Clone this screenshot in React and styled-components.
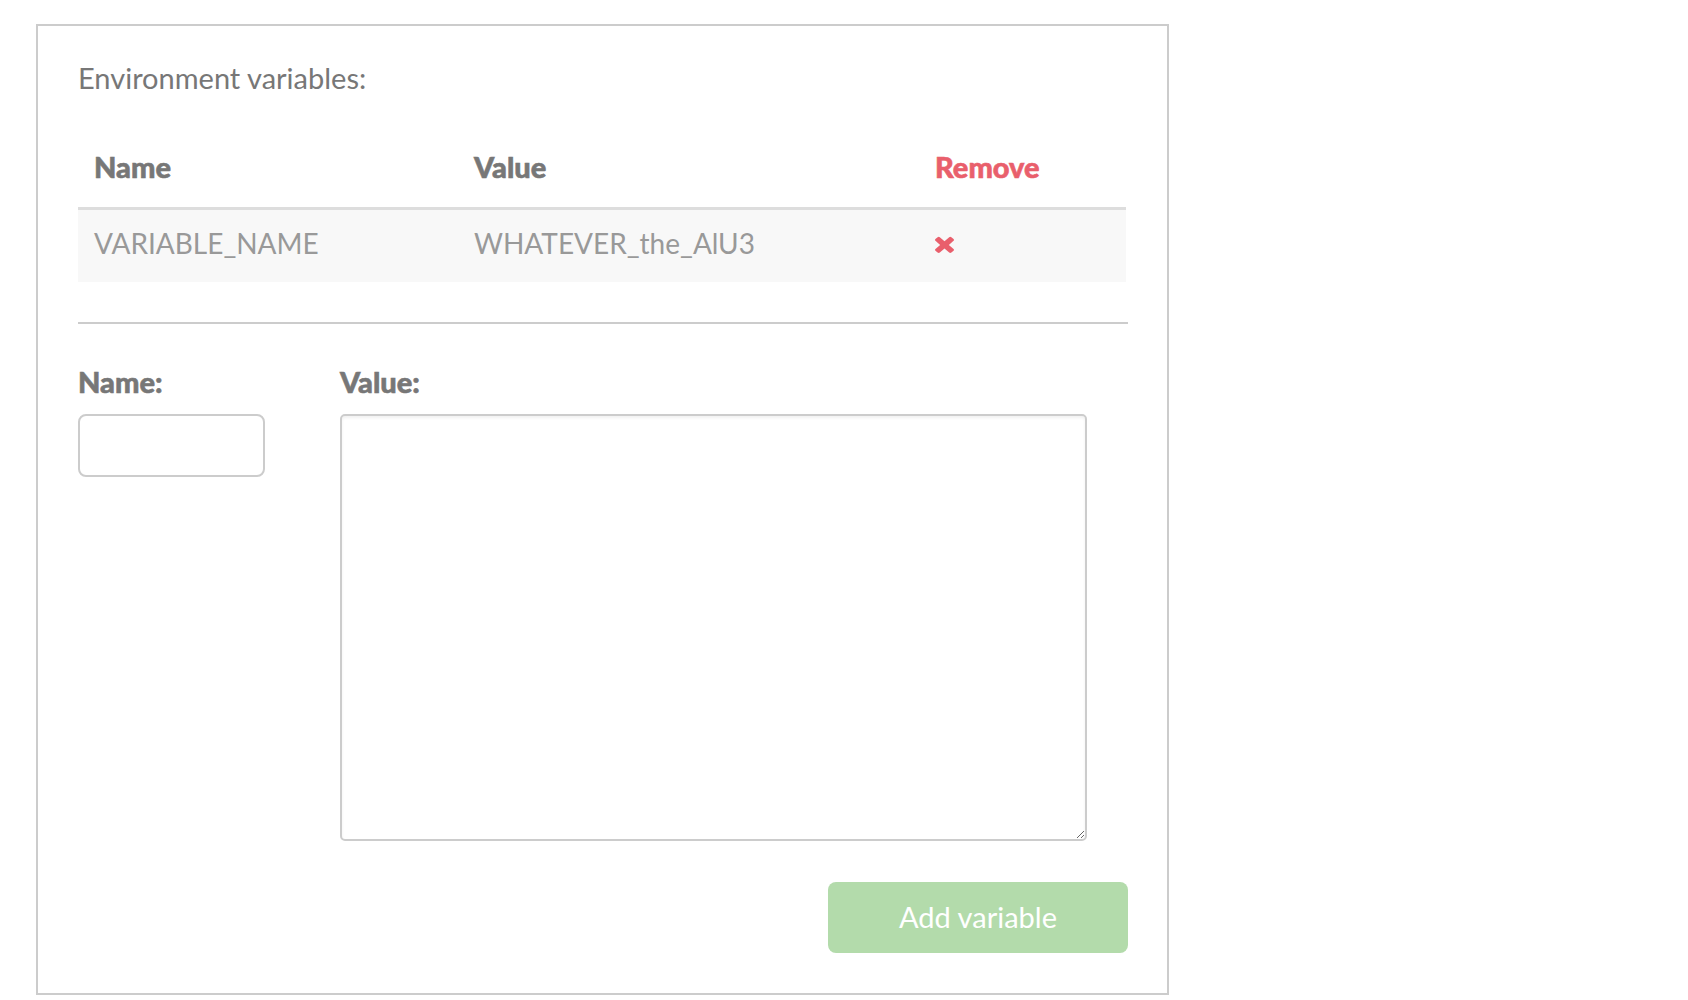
import styled, { createGlobalStyle } from "styled-components";

const GlobalStyle = createGlobalStyle`
  body {
    margin: 0;
    background: #ffffff;
    font-family: Lato, "Open Sans", sans-serif;
  }
`;

const Panel = styled.div`
  box-sizing: border-box;
  width: 1133px;
  margin: 24px 0 0 36px;
  padding: 35px 39px 40px 40px;
  border: 2px solid #cccccc;
`;

const Title = styled.h2`
  margin: 0;
  font-size: 29px;
  line-height: 34px;
  font-weight: 400;
  color: #777777;
`;

const Table = styled.table`
  width: 1048px;
  margin-top: 39px;
  border-collapse: separate;
  border-spacing: 0;
  table-layout: fixed;
`;

const HeadCell = styled.th`
  width: ${(p) => p.$width - 32}px;
  padding: 16px 16px 23px;
  text-align: left;
  font-size: 29px;
  line-height: 34px;
  font-weight: 900;
  -webkit-text-stroke: 0.6px currentColor;
  color: ${(p) => (p.$danger ? "#e95f6c" : "#777777")};
  border-bottom: 3px solid #dddddd;
`;

const Row = styled.tr`
  background: #f8f8f8;
`;

const Cell = styled.td`
  padding: 16px 16px 22px;
  font-size: 28px;
  line-height: 34px;
  color: #999999;
  vertical-align: middle;
`;

const RemoveButton = styled.button`
  display: block;
  padding: 0;
  margin-top: 4px;
  border: 0;
  background: none;
  cursor: pointer;
  color: #e95f6c;
`;

const Divider = styled.hr`
  margin: 40px 0 0;
  height: 0;
  border: 0;
  border-top: 2px solid #cccccc;
`;

const Form = styled.div`
  display: flex;
  margin-top: 41px;
`;

const Field = styled.div`
  flex: none;
  width: ${(p) => p.$width}px;
`;

const Label = styled.label`
  display: block;
  margin-bottom: 15px;
  font-size: 29px;
  line-height: 34px;
  font-weight: 900;
  -webkit-text-stroke: 0.6px currentColor;
  color: #777777;
`;

const TextInput = styled.input`
  display: block;
  box-sizing: border-box;
  width: 187px;
  height: 63px;
  padding: 0 14px;
  border: 2px solid #cccccc;
  border-radius: 8px;
  font-family: inherit;
  font-size: 26px;
  color: #777777;
  outline: none;
`;

const TextArea = styled.textarea`
  display: block;
  box-sizing: border-box;
  width: 747px;
  height: 427px;
  padding: 12px 14px;
  border: 2px solid #cccccc;
  border-radius: 5px;
  box-shadow: inset 0 2px 3px rgba(0, 0, 0, 0.06);
  font-family: inherit;
  font-size: 26px;
  color: #777777;
  outline: none;
`;

const Actions = styled.div`
  display: flex;
  justify-content: flex-end;
  margin-top: 41px;
`;

const AddButton = styled.button`
  width: 300px;
  height: 71px;
  padding: 0 0 3px;
  border: 0;
  border-radius: 8px;
  background: #b3dbab;
  color: #ffffff;
  font-family: inherit;
  font-size: 29px;
  font-weight: 400;
  cursor: pointer;
`;

const TimesIcon = () => (
  <svg width="19" height="18" viewBox="110 238 1188 1316" preserveAspectRatio="none" fill="currentColor">
    <path d="M1298 1322q0 40-28 68l-136 136q-28 28-68 28t-68-28l-294-294-294 294q-28 28-68 28t-68-28l-136-136q-28-28-28-68t28-68l294-294-294-294q-28-28-28-68t28-68l136-136q28-28 68-28t68 28l294 294 294-294q28-28 68-28t68 28l136 136q28 28 28 68t-28 68l-294 294 294 294q28 28 28 68z" />
  </svg>
);

const variables = [{ name: "VARIABLE_NAME", value: "WHATEVER_the_AlU3" }];

export default function App() {
  return (
    <>
      <GlobalStyle />
      <Panel>
        <Title>Environment variables:</Title>
        <Table>
          <thead>
            <tr>
              <HeadCell $width={380}>Name</HeadCell>
              <HeadCell $width={461}>Value</HeadCell>
              <HeadCell $width={207} $danger>Remove</HeadCell>
            </tr>
          </thead>
          <tbody>
            {variables.map((v) => (
              <Row key={v.name}>
                <Cell>{v.name}</Cell>
                <Cell>{v.value}</Cell>
                <Cell>
                  <RemoveButton aria-label="Remove">
                    <TimesIcon />
                  </RemoveButton>
                </Cell>
              </Row>
            ))}
          </tbody>
        </Table>
        <Divider />
        <Form>
          <Field $width={262}>
            <Label htmlFor="env-name">Name:</Label>
            <TextInput id="env-name" type="text" />
          </Field>
          <Field $width={747}>
            <Label htmlFor="env-value">Value:</Label>
            <TextArea id="env-value" />
          </Field>
        </Form>
        <Actions>
          <AddButton>Add variable</AddButton>
        </Actions>
      </Panel>
    </>
  );
}
